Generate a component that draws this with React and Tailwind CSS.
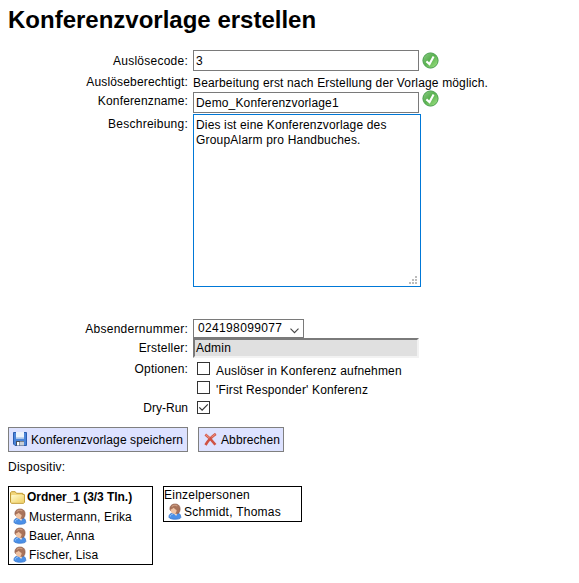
import React from 'react';

function Row({ label, labelTop, labelClass = '', className = '', children }) {
  return (
    <div className={`flex items-start ${className}`}>
      <div className="w-[188px] mr-[5px] shrink-0 flex justify-end">
        <span className={`${labelTop} ${labelClass}`}>{label}</span>
      </div>
      {children}
    </div>
  );
}

function CheckBadge({ className }) {
  return (
    <svg className={`w-[17px] h-[17px] shrink-0 ${className}`} viewBox="0 0 17 17">
      <defs>
        <linearGradient id="badge" x1="0" y1="0" x2="1" y2="1">
          <stop offset="0" stopColor="#8fce88" />
          <stop offset="0.45" stopColor="#58b04f" />
          <stop offset="1" stopColor="#a6e888" />
        </linearGradient>
      </defs>
      <circle cx="8.5" cy="8.5" r="7.6" fill="url(#badge)" stroke="#4a9f4e" strokeWidth="1" />
      <path d="M4.4 9.4 L7.5 12 L11.6 4.4" fill="none" stroke="#fff" strokeWidth="2.1" />
    </svg>
  );
}

function Person() {
  return (
    <svg className="w-[14px] h-[17px] shrink-0" viewBox="0 0 14 17">
      <path d="M.9 14.2 C.9 11.6 2.4 10.4 4.6 10.2 L9.6 9.8 C12 10.4 12.8 12.4 12.8 14.6 C12.2 16.8 2 17 .9 14.2Z" fill="#4a90e8" stroke="#3572c8" strokeWidth=".7" />
      <path d="M2.2 13.6 C2.4 12 3.4 11.4 4.8 11.3" stroke="#9cc8f8" fill="none" />
      <path d="M5.2 10 L8.2 13 L9.8 9.6Z" fill="#f6dcc8" />
      <path d="M2 7 C1.4 3 3.8 1 7 1 C10.8 1 12.6 3.6 12 7.2 C11.6 9.6 10.4 10.8 8.6 10.6 L4 9Z" fill="#a8735a" stroke="#8a5644" strokeWidth=".6" />
      <path d="M2.5 6.4 C3.8 6.2 5 5.6 5.8 4.8 C6.6 6 7.6 6.6 8.6 7 C8.6 9 7.6 10.8 6 10.8 C3.8 10.8 2.5 8.6 2.5 6.4Z" fill="#f0c4a4" />
      <path d="M3.8 3.6 C5.2 2 7.6 1.8 9.4 3" stroke="#cc9c80" strokeWidth="1.1" fill="none" />
    </svg>
  );
}

function Folder() {
  return (
    <svg className="w-[15px] h-[13px] shrink-0" viewBox="0 0 15 13">
      <defs>
        <linearGradient id="folder" x1="0" y1="0" x2="1" y2="1">
          <stop offset="0" stopColor="#fffbd0" />
          <stop offset="1" stopColor="#f0cf62" />
        </linearGradient>
      </defs>
      <path d="M.5 11 V1.8 L1.4 .7 H5.2 L6.4 2.3 H12.8 V3.6 H14.4 V11.4 L13.6 12.3 H1.4Z" fill="#f3d77c" stroke="#c09a34" />
      <path d="M1.2 11.6 V4.6 L2 4 H13.8 V11.6Z" fill="url(#folder)" />
    </svg>
  );
}

function Floppy() {
  return (
    <svg className="w-[14px] h-[14px] shrink-0" viewBox="0 0 14 14">
      <path d="M.5 .5 H13.5 V13.5 H2 L.5 12Z" fill="#4a84d8" stroke="#2c5cb0" />
      <rect x="3" y="0" width="8" height="6.5" fill="#edf3fb" />
      <rect x="3" y="5.2" width="8" height="1.3" fill="#b6cdec" />
      <rect x="3" y="9" width="8" height="4.5" fill="#4a4f59" />
      <rect x="4" y="10" width="2.4" height="3.5" fill="#fff" />
      <rect x="7" y="9.6" width="4" height="3.9" fill="#c9ced6" />
    </svg>
  );
}

function Cross() {
  return (
    <svg className="w-[13px] h-[13px] shrink-0" viewBox="0 0 13 13">
      <path d="M1.3 1.5 C4 3.5 8.5 8 11.4 11.7 M11.8 .9 C7.5 3.8 4 7.5 1.5 12" fill="none" stroke="#cf5344" strokeWidth="2.6" />
      <path d="M1.4 1.4 L5.5 5.2 M11.2 1.1 L7.5 4.3" fill="none" stroke="#ea8e7e" strokeWidth="1.1" />
    </svg>
  );
}

function Box({ checked, className }) {
  return (
    <span className={`w-[13px] h-[13px] shrink-0 border border-[#333] bg-white ${className}`}>
      {checked && (
        <svg className="block w-[11px] h-[11px]" viewBox="0 0 11 11">
          <path d="M1.3 5.3 L4.1 8.1 L9.8 2.4" fill="none" stroke="#333" strokeWidth="1.2" />
        </svg>
      )}
    </span>
  );
}

function Member({ name, track = '' }) {
  return (
    <div className="flex h-[19px] pl-[4px]">
      <Person />
      <span className={`ml-[2px] mt-[2px] ${track}`}>{name}</span>
    </div>
  );
}

export default function App() {
  return (
    <main className="w-[579px] h-[583px] overflow-hidden bg-white text-black font-['Liberation_Sans',Arial,sans-serif] text-[12px] leading-[14px] whitespace-nowrap">
      <h1 className="h-[50px] pl-[8px] pt-[6px] text-[24px] leading-[28px] font-bold">Konferenzvorlage erstellen</h1>

      <Row label="Auslösecode:" labelTop="mt-[4px]" labelClass="tracking-[0.25px]" className="h-[21px]">
        <div className="w-[226px] h-[21px] border border-[#7a7a7a] pl-[2px] pt-[3px]">3</div>
        <CheckBadge className="ml-[3px] mt-[2px]" />
      </Row>
      <Row label="Auslöseberechtigt:" labelTop="mt-[4px]" labelClass="tracking-[0.17px]" className="h-[21px]">
        <span className="mt-[5px] tracking-[0.155px]">Bearbeitung erst nach Erstellung der Vorlage möglich.</span>
      </Row>
      <Row label="Konferenzname:" labelTop="mt-[2px]" labelClass="tracking-[0.15px]" className="h-[22px]">
        <div className="w-[226px] h-[21px] border border-[#7a7a7a] pl-[2px] pt-[3px] tracking-[0.15px]">Demo_Konferenzvorlage1</div>
        <CheckBadge className="ml-[3px] -mt-[2px]" />
      </Row>
      <Row label="Beschreibung:" labelTop="mt-[3px]" labelClass="tracking-[0.25px]" className="h-[205px]">
        <div className="flex flex-col justify-between w-[228px] h-[173px] border border-[#0078d7] pl-[2px] pt-[3px]">
          <div className="leading-[15px]">
            <div className="tracking-[0.15px]">Dies ist eine Konferenzvorlage des</div>
            <div className="tracking-[0.2px]">GroupAlarm pro Handbuches.</div>
          </div>
          <svg className="self-end w-[8px] h-[8px] mr-[3px] mb-[2px]" viewBox="0 0 8 8" fill="#bcbcbc">
            <path d="M6 0h2v2h-2z M3 3h2v2h-2z M6 3h2v2h-2z M0 6h2v2h-2z M3 6h2v2h-2z M6 6h2v2h-2z" />
          </svg>
        </div>
      </Row>
      <Row label="Absendernummer:" labelTop="mt-[3px]" labelClass="tracking-[0.27px]" className="h-[19px]">
        <div className="flex w-[111px] h-[19px] border border-[#7a7a7a] pl-[4px] pt-[1px]">
          <span className="tracking-[0.35px]">024198099077</span>
          <svg className="w-[9px] h-[6px] ml-auto mr-[4px] mt-[7px]" viewBox="0 0 9 6">
            <path d="M.5 .7 L4.5 4.7 L8.5 .7" fill="none" stroke="#444" strokeWidth="1.1" />
          </svg>
        </div>
      </Row>
      <Row label="Ersteller:" labelTop="mt-[3px]" labelClass="tracking-[0.2px]" className="h-[20px]">
        <div className="w-[226px] h-[20px] border-2 border-t-[#7a7a7a] border-l-[#7a7a7a] border-r-[#f2f2f2] border-b-[#f2f2f2] bg-[#e0e0e0] pl-[1px] pt-[1px] tracking-[0.2px]">Admin</div>
      </Row>
      <Row label="Optionen:" labelTop="mt-[4px]" labelClass="tracking-[0.15px]" className="h-[20px]">
        <Box className="ml-[4px] mt-[4px]" />
        <span className="ml-[6px] mt-[6px] tracking-[0.16px]">Auslöser in Konferenz aufnehmen</span>
      </Row>
      <Row label="" labelTop="mt-0" className="h-[20px]">
        <Box className="ml-[4px] mt-[3px]" />
        <span className="ml-[6px] mt-[5px] tracking-[0.15px]">'First Responder' Konferenz</span>
      </Row>
      <Row label="Dry-Run" labelTop="mt-[3px]" className="h-[29px]">
        <Box checked className="ml-[4px] mt-[3px]" />
      </Row>

      <div className="flex gap-[10px] pl-[8px]">
        <button className="flex w-[180px] h-[25px] border border-[#7f7f7f] bg-[#dde2ff] pl-[4px] pt-[4px]">
          <Floppy /><span className="ml-[4px] mt-[1px] tracking-[0.1px]">Konferenzvorlage speichern</span>
        </button>
        <button className="flex w-[86px] h-[25px] border border-[#7f7f7f] bg-[#dde2ff] pl-[5px] pt-[5px]">
          <Cross /><span className="ml-[4px] tracking-[0.1px]">Abbrechen</span>
        </button>
      </div>

      <div className="h-[34px] pl-[8px] pt-[8px] tracking-[0.25px]">Dispositiv:</div>

      <div className="flex items-start gap-[10px] pl-[8px]">
        <section className="w-[145px] h-[79px] border border-black">
          <div className="flex h-[21px] pl-[1px] pt-[4px]">
            <Folder /><span className="ml-[2px] -mt-[1px] font-bold tracking-[-0.05px]">Ordner_1 (3/3 Tln.)</span>
          </div>
          <Member name="Mustermann, Erika" track="tracking-[0.13px]" />
          <Member name="Bauer, Anna" />
          <Member name="Fischer, Lisa" track="tracking-[0.15px]" />
        </section>
        <section className="w-[139px] h-[36px] border border-black">
          <div className="h-[16px] pt-[1px] tracking-[0.23px]">Einzelpersonen</div>
          <Member name="Schmidt, Thomas" track="tracking-[0.26px]" />
        </section>
      </div>
    </main>
  );
}
